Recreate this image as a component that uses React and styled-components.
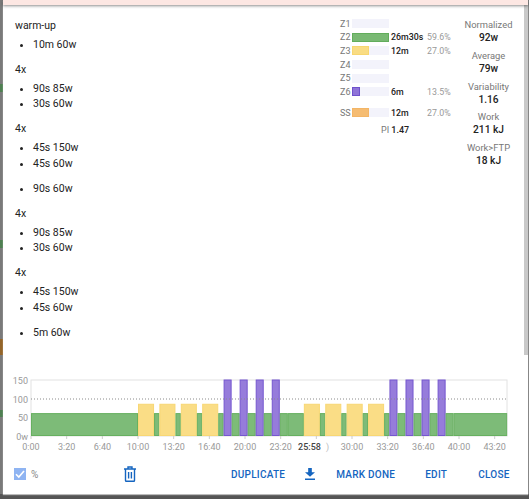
import React from "react";
import styled, { createGlobalStyle } from "styled-components";

const GlobalStyle = createGlobalStyle`
    html, body {
        margin: 0;
        padding: 0;
        height: 100%;
        overflow: hidden;
        font-family: Roboto, "Liberation Sans", sans-serif;
    }
`;

const Backdrop = styled.div`
    box-sizing: border-box;
    height: 499px;
    width: 529px;
    padding: 0 1px 5px 3px;
    display: flex;
    background-color: #7a7a7a;
    background-image:
        linear-gradient(to bottom, #555 0, #555 100%),
        linear-gradient(
            to bottom,
            #7a7a7a 84px, #4f7f52 84px, #4f7f52 92px,
            #7a7a7a 92px, #7a7a7a 240px, #4f7f52 240px, #4f7f52 248px,
            #7a7a7a 248px, #7a7a7a 339px, #94652a 339px, #94652a 355px,
            #7a7a7a 355px, #7a7a7a 410px, #4f7f52 410px, #4f7f52 417px,
            #7a7a7a 417px
        );
    background-size: 100% 5px, 3px 100%;
    background-position: 0 100%, 0 0;
    background-repeat: no-repeat;
`;

const Dialog = styled.div`
    flex: 1;
    min-width: 0;
    display: flex;
    flex-direction: column;
    background: #fff;
    box-shadow: 0 1px 1px rgba(255, 255, 255, 0.6);
`;

const TopBar = styled.div`
    height: 5px;
    flex: none;
    background: #fde7e3;
    box-shadow: 0 1px 3px rgba(0, 0, 0, 0.45);
    position: relative;
`;

const Body = styled.div`
    height: 350px;
    flex: none;
    display: flex;
`;

const Steps = styled.div`
    flex: 1;
    padding: 13px 0 0 12px;
    font-size: 10.5px;
    line-height: 15.7px;
    color: #222;
`;

const StepLabel = styled.div`
    margin-bottom: 3px;
`;

const StepList = styled.ul`
    margin: 0 0 9.4px;
    padding: 0 0 0 18px;
    li {
        padding: 0;
    }
`;

const Zones = styled.div`
    width: 113px;
    flex: none;
    padding-top: 12px;
    font-size: 9px;
`;

const ZoneRow = styled.div`
    display: flex;
    align-items: center;
    height: 13.6px;
    margin-top: ${(p) => (p.$spaced ? "7.4px" : "0")};
`;

const ZoneName = styled.span`
    width: 12px;
    color: #777;
`;

const ZoneTrack = styled.div`
    width: 37px;
    height: 9px;
    margin: 0 2px 0 0;
    background: #f3f3fb;
`;

const ZoneFill = styled.div`
    box-sizing: border-box;
    height: 100%;
    background: ${(p) => p.$color};
    border: 1px solid ${(p) => p.$edge};
`;

const ZoneTime = styled.span`
    width: 36px;
    font-size: 8.8px;
    font-weight: 500;
    color: #222;
    white-space: nowrap;
`;

const ZonePct = styled.span`
    font-size: 8.8px;
    color: #999;
`;

const Peak = styled.div`
    margin: 4.7px 0 0 41px;
    line-height: 13px;
    color: #777;
    b {
        font-weight: 500;
        color: #222;
    }
`;

const Summary = styled.div`
    width: 71px;
    flex: none;
    padding-top: 13px;
    text-align: center;
`;

const Metric = styled.div`
    height: 30.8px;
`;

const MetricLabel = styled.div`
    font-size: 9.4px;
    line-height: 13px;
    color: #777;
`;

const MetricValue = styled.div`
    font-size: 10.2px;
    line-height: 13px;
    font-weight: 500;
    color: #222;
`;

const ScrollTrack = styled.div`
    width: 4px;
    flex: none;
    background: #c9c9c9;
`;

const Chart = styled.svg`
    display: block;
    flex: none;
    margin-top: 20px;
    font-family: Roboto, "Liberation Sans", sans-serif;
`;

const Footer = styled.div`
    display: flex;
    align-items: center;
    height: 30px;
    margin-top: 6px;
    padding-left: 11px;
    font-size: 10px;
    font-weight: 500;
    letter-spacing: 0.25px;
    color: #1565c0;
`;

const CheckBox = styled.span`
    width: 12px;
    height: 12px;
    flex: none;
    background: #8fb4f2;
    display: flex;
    align-items: center;
    justify-content: center;
`;

const CheckLabel = styled.span`
    margin-left: 5px;
    width: 93px;
    flex: none;
    font-weight: 400;
    color: #888;
`;

const TextButton = styled.span`
    margin-left: ${(p) => p.$gap}px;
    white-space: nowrap;
`;

const IconSlot = styled.span`
    margin-left: ${(p) => p.$gap}px;
    display: flex;
`;

const workout = [
    { label: "warm-up", steps: [[600, 60]] },
    { label: "4x", reps: 4, steps: [[90, 85], [30, 60]] },
    { label: "4x", reps: 4, steps: [[45, 150], [45, 60]] },
    { steps: [[90, 60]] },
    { label: "4x", reps: 4, steps: [[90, 85], [30, 60]] },
    { label: "4x", reps: 4, steps: [[45, 150], [45, 60]] },
    { steps: [[300, 60]] },
];

const zones = [
    { name: "Z1" },
    { name: "Z2", time: "26m30s", pct: 59.6, color: "#79b973", edge: "#62ad5b" },
    { name: "Z3", time: "12m", pct: 27.0, color: "#f9dc83", edge: "#f7d670" },
    { name: "Z4" },
    { name: "Z5" },
    { name: "Z6", time: "6m", pct: 13.5, color: "#8f74d8", edge: "#6f52cc" },
    { name: "SS", time: "12m", pct: 27.0, color: "#f5bc72", edge: "#f3b566", spaced: true },
];

const metrics = [
    ["Normalized", "92w"],
    ["Average", "79w"],
    ["Variability", "1.16"],
    ["Work", "211 kJ"],
    ["Work>FTP", "18 kJ"],
];

function stepName(secs, watts) {
    if (secs >= 300) return `${secs / 60}m ${watts}w`;
    return `${secs}s ${watts}w`;
}

const X0 = 28; // chart x of 0:00 inside the dialog
const PX_PER_SEC = 10.7 / 60;
const AXIS_Y = 61;
const HOVER_TICK = 1600; // this tick's label sits under the 25:58 cursor label
const wattY = (w) => AXIS_Y - (w * 56) / 150;

function buildSegments() {
    let t = 0;
    const out = [];
    workout.forEach((block) => {
        for (let i = 0; i < (block.reps || 1); i++) {
            block.steps.forEach(([secs, watts]) => {
                out.push({ t, secs, watts });
                t += secs;
            });
        }
    });
    return out;
}

function segmentColors(watts) {
    if (watts >= 120) return ["#967cdb", "#7557cf"];
    if (watts >= 80) return ["#fadd86", "#f8d774"];
    return ["#7dbb78", "#67b060"];
}

function fmtTime(secs) {
    const m = Math.floor(secs / 60);
    const s = secs % 60;
    return `${m}:${s < 10 ? "0" : ""}${s}`;
}

function WorkoutChart() {
    const ticks = [];
    for (let s = 0; s <= 2600; s += 200) ticks.push(s);
    return (
        <Chart width="521" height="78" viewBox="0 0 521 78">
            <rect x={X0} y="5" width="476" height="56" fill="#fff" stroke="#e2e2e2" />
            {buildSegments().map((seg) => {
                const [fill, edge] = segmentColors(seg.watts);
                const top = Math.max(wattY(seg.watts), 5);
                return (
                    <rect
                        key={seg.t}
                        x={X0 + seg.t * PX_PER_SEC + 0.5}
                        y={top}
                        width={seg.secs * PX_PER_SEC - 1}
                        height={AXIS_Y - top - 0.5}
                        fill={fill}
                        stroke={edge}
                    />
                );
            })}
            <line x1={X0} x2={X0 + 476} y1="24" y2="24" stroke="#8a8a8a" strokeDasharray="1 2" />
            {[[150, 8.5], [100, 27.5], [50, 46], ["0w", 64.5]].map(([t, y]) => (
                <text key={t} x={X0 - 3} y={y} textAnchor="end" fontSize="9" fill="#999">{t}</text>
            ))}
            {ticks.map((s) => {
                const x = X0 + s * PX_PER_SEC;
                return (
                    <g key={s}>
                        <line x1={x} x2={x} y1={AXIS_Y} y2={AXIS_Y + 3} stroke="#ccc" />
                        {s !== HOVER_TICK && (
                            <text x={x} y={AXIS_Y + 14} textAnchor="middle" fontSize="9" fill="#999">
                                {fmtTime(s)}
                            </text>
                        )}
                    </g>
                );
            })}
            <text x="323" y={AXIS_Y + 14} fontSize="9" fill="#bbb">)</text>
            <text x="306.5" y={AXIS_Y + 14} textAnchor="middle" fontSize="9" fontWeight="500" fill="#444">25:58</text>
        </Chart>
    );
}

export default function App() {
    return (
        <Backdrop>
            <GlobalStyle />
            <Dialog>
                <TopBar />
                <Body>
                    <Steps>
                        {workout.map((block, i) => (
                            <div key={i}>
                                {block.label && <StepLabel>{block.label}</StepLabel>}
                                <StepList>
                                    {block.steps.map(([secs, watts]) => (
                                        <li key={secs}>{stepName(secs, watts)}</li>
                                    ))}
                                </StepList>
                            </div>
                        ))}
                    </Steps>
                    <Zones>
                        {zones.map((z) => (
                            <ZoneRow key={z.name} $spaced={z.spaced}>
                                <ZoneName>{z.name}</ZoneName>
                                <ZoneTrack>
                                    {z.pct && (
                                        <ZoneFill
                                            $color={z.color}
                                            $edge={z.edge}
                                            style={{ width: `${(z.pct / 59.6) * 100}%` }}
                                        />
                                    )}
                                </ZoneTrack>
                                <ZoneTime>{z.time}</ZoneTime>
                                {z.pct && <ZonePct>{z.pct.toFixed(1)}%</ZonePct>}
                            </ZoneRow>
                        ))}
                        <Peak>PI <b>1.47</b></Peak>
                    </Zones>
                    <Summary>
                        {metrics.map(([label, value]) => (
                            <Metric key={label}>
                                <MetricLabel>{label}</MetricLabel>
                                <MetricValue>{value}</MetricValue>
                            </Metric>
                        ))}
                    </Summary>
                    <ScrollTrack />
                </Body>
                <WorkoutChart />
                <Footer>
                    <CheckBox>
                        <svg width="10" height="10" viewBox="0 0 10 10">
                            <path d="M1 5.2 3.8 8 9 2" fill="none" stroke="#fff" strokeWidth="1.6" />
                        </svg>
                    </CheckBox>
                    <CheckLabel>%</CheckLabel>
                    <IconSlot $gap={0}>
                        <svg width="12" height="16" viewBox="0 0 12 16" fill="none" stroke="#1565c0" strokeWidth="1.4">
                            <path d="M0 3h12M4 3V1h4v2M1.5 3v11.5q0 .8.8.8h7.4q.8 0 .8-.8V3M4.6 6v6.5M7.4 6v6.5" />
                        </svg>
                    </IconSlot>
                    <TextButton $gap={95}>DUPLICATE</TextButton>
                    <IconSlot $gap={20}>
                        <svg width="10" height="12" viewBox="0 0 11 13" fill="#1565c0">
                            <path d="M3.5 0h4v4.5H11L5.5 9.5 0 4.5h3.5zM0 11.5h11V13H0z" />
                        </svg>
                    </IconSlot>
                    <TextButton $gap={21}>MARK DONE</TextButton>
                    <TextButton $gap={30}>EDIT</TextButton>
                    <TextButton $gap={31}>CLOSE</TextButton>
                </Footer>
            </Dialog>
        </Backdrop>
    );
}
